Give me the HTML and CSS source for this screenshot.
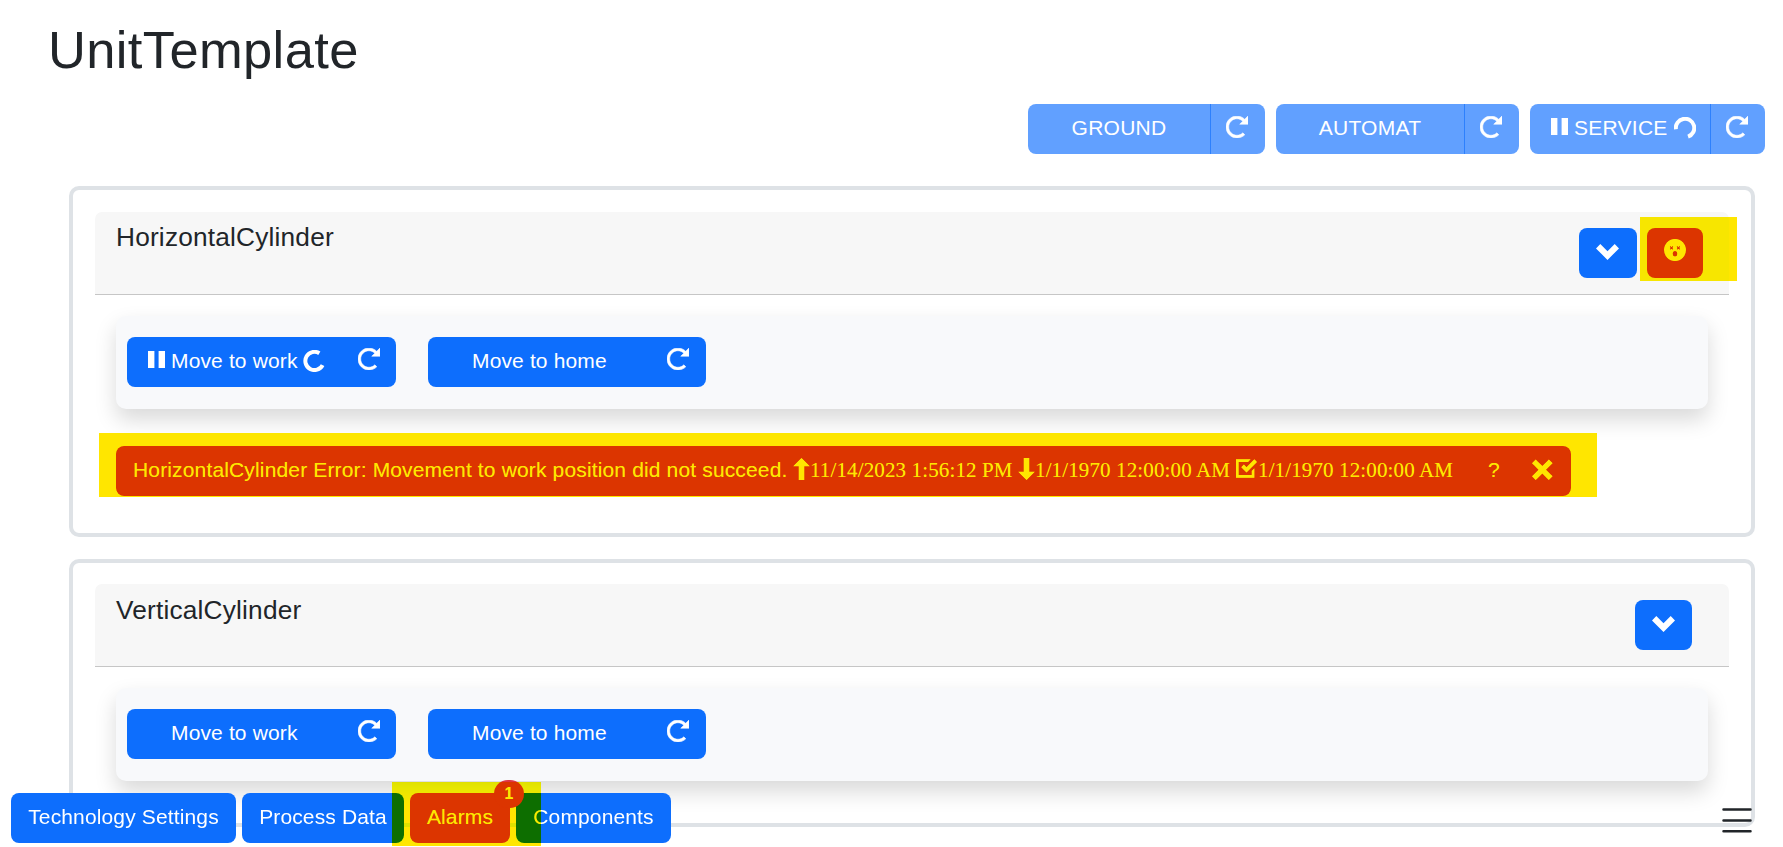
FILE: index.html
```html
<!DOCTYPE html>
<html lang="en">
<head>
<meta charset="utf-8">
<title>UnitTemplate</title>
<link rel="stylesheet" href="styles.css">
</head>
<body>
<svg class="defs" width="0" height="0">
  <symbol id="reload" viewBox="0 0 8 8"><path d="M4 0c-2.2 0-4 1.8-4 4s1.8 4 4 4c1.1 0 2.12-.43 2.84-1.16l-.72-.72c-.54.54-1.29.88-2.13.88-1.66 0-3-1.34-3-3s1.34-3 3-3c.83 0 1.55.36 2.09.91l-1.09 1.09h3v-3l-1.19 1.19c-.72-.72-1.71-1.19-2.81-1.19z"/></symbol>
  <symbol id="pause" viewBox="0 0 17 17"><path d="M0 0h6.4v17H0zM10.6 0H17v17h-6.4z"/></symbol>
  <symbol id="chevron" viewBox="0 0 8 5.5"><path d="M1.5 0l-1.5 1.5 4 4 4-4-1.5-1.5-2.5 2.5-2.5-2.5z"/></symbol>
  <symbol id="up" viewBox="0 0 6 8"><path d="M3 0l-3 3h2v5h2v-5h2l-3-3z"/></symbol>
  <symbol id="down" viewBox="0 0 6 8"><path d="M2 0v5h-2l3.03 3 2.97-3h-2v-5h-2z"/></symbol>
  <symbol id="task" viewBox="0 0 8 7"><path d="M0 0v7h7v-3.59l-1 1v1.59h-5v-5h3.59l1-1h-5.59zm7 0l-3 3-1-1-1 1 2 2 4-4-1-1z"/></symbol>
  <symbol id="cross" viewBox="0 0 8 8"><path d="M1.41 0l-1.41 1.41.72.72 1.78 1.81-1.78 1.78-.72.69 1.41 1.44.72-.72 1.81-1.81 1.78 1.81.69.72 1.44-1.44-.72-.69-1.81-1.78 1.81-1.81.72-.72-1.44-1.41-.69.72-1.78 1.78-1.81-1.78-.72-.72z"/></symbol>
</svg>

<h1 class="title">UnitTemplate</h1>

<div class="modes">
  <div class="group ground"><button class="main">GROUND</button><button class="side"><svg class="reload"><use href="#reload"/></svg></button></div>
  <div class="group automat"><button class="main">AUTOMAT</button><button class="side"><svg class="reload"><use href="#reload"/></svg></button></div>
  <div class="group service"><button class="main"><svg class="pause"><use href="#pause"/></svg><span>SERVICE</span><svg class="spinner" viewBox="0 0 21 21"><path d="M1.8 11.6A8.8 8.8 0 1 1 13.4 18.8"/></svg></button><button class="side"><svg class="reload"><use href="#reload"/></svg></button></div>
</div>

<main class="cards">
  <section class="card card-tall">
    <header class="head">
      <h5 class="name">HorizontalCylinder</h5>
      <div class="tools">
        <button class="btn toggle"><svg class="chevron"><use href="#chevron"/></svg></button>
        <button class="btn danger face-btn"><svg class="face" viewBox="0 0 22 22"><circle cx="11" cy="11" r="10.9" fill="#fff"/><g stroke="#dc3545" stroke-width="1.1"><path d="M6 7.3l3 3M9 7.3l-3 3M12.9 7.3l3 3M15.9 7.3l-3 3"/></g><ellipse cx="11" cy="14.8" rx="2.3" ry="2.7" fill="#dc3545"/></svg></button>
      </div>
    </header>
    <div class="panel">
      <button class="btn task-btn work"><svg class="pause"><use href="#pause"/></svg><span class="label">Move to work</span><svg class="spinner" viewBox="0 0 21 21"><path d="M15.6 3.1A8.7 8.7 0 1 0 18.7 14.4"/></svg><svg class="reload"><use href="#reload"/></svg></button>
      <button class="btn task-btn home"><span class="label">Move to home</span><svg class="reload"><use href="#reload"/></svg></button>
    </div>
    <div class="alarm">
      <span class="message">HorizontalCylinder Error: Movement to work position did not succeed.</span>
      <span class="stamp raised"><svg class="arrow"><use href="#up"/></svg><span class="time">11/14/2023 1:56:12 PM</span></span>
      <span class="stamp fallen"><svg class="arrow"><use href="#down"/></svg><span class="time">1/1/1970 12:00:00 AM</span></span>
      <span class="stamp acked"><svg class="check"><use href="#task"/></svg><span class="time">1/1/1970 12:00:00 AM</span></span>
      <span class="help">?</span>
      <svg class="cross"><use href="#cross"/></svg>
    </div>
  </section>

  <section class="card card-short">
    <header class="head">
      <h5 class="name">VerticalCylinder</h5>
      <div class="tools tools-single">
        <button class="btn toggle"><svg class="chevron"><use href="#chevron"/></svg></button>
      </div>
    </header>
    <div class="panel">
      <button class="btn task-btn work"><span class="label">Move to work</span><svg class="reload"><use href="#reload"/></svg></button>
      <button class="btn task-btn home"><span class="label">Move to home</span><svg class="reload"><use href="#reload"/></svg></button>
    </div>
  </section>
</main>

<footer class="bar">
  <button class="btn settings">Technology Settings</button>
  <button class="btn process">Process Data</button>
  <button class="btn danger alarms">Alarms<span class="badge">1</span></button>
  <button class="btn components">Components</button>
  <svg class="menu" viewBox="0 0 30 26"><path d="M1.5 2.6h27M1.5 13.4h27M1.5 24.2h27"/></svg>
</footer>

<div class="marker marker-face"></div>
<div class="marker marker-alarm"></div>
<div class="marker marker-tab"></div>
</body>
</html>
```
FILE: styles.css
```css
* { box-sizing: border-box; }

body {
  position: relative;
  margin: 0;
  width: 1783px;
  height: 847px;
  overflow: hidden;
  background: #fff;
  color: #212529;
  font: 21px/31.5px "Liberation Sans", Arial, sans-serif;
}

.defs { position: absolute; }

svg { display: block; flex: none; fill: currentColor; }

button {
  margin: 0;
  padding: 0;
  border: 0;
  color: #fff;
  background: none;
  font: inherit;
  letter-spacing: .14px;
  white-space: nowrap;
}

.title {
  margin: 0;
  padding: 18px 0 0 48px;
  height: 104px;
  font-size: 52.5px;
  line-height: 63px;
  font-weight: 400;
  letter-spacing: .36px;
}

.reload { width: 22px; height: 22px; stroke: currentColor; stroke-width: .2; }
.pause { width: 17px; height: 17px; }
.chevron { width: 23px; height: 16px; }
.spinner { width: 22px; height: 22px; fill: none; stroke: currentColor; stroke-width: 3.8; }

/* unit modes */
.modes {
  display: flex;
  justify-content: flex-end;
  gap: 11px;
  height: 82px;
  padding-right: 18px;
}
.group {
  display: flex;
  height: 50px;
  border-radius: 8px;
  overflow: hidden;
  background: #61a0ff;
}
.ground { width: 237px; }
.automat { width: 243px; }
.service { width: 235px; }
.main {
  display: flex;
  flex: 1;
  align-items: center;
  justify-content: center;
  padding-bottom: 3px;
  letter-spacing: .25px;
}
.side {
  width: 55px;
  padding: 12px 0 0 15px;
  border-left: 1px solid #2d80fd;
}
.side .reload { margin-top: -17px; }
.service .main { justify-content: flex-start; padding-left: 21px; }
.service .pause { margin: -2px 6px 0 0; }
.service .spinner { margin: 0 0 0 6px; }

/* cylinder cards */
.cards {
  display: flex;
  flex-direction: column;
  gap: 22px;
  padding: 0 28px 0 69px;
}
.card {
  border: 4px solid #dee2e6;
  border-radius: 10px;
}
.card-tall { height: 351px; padding: 22px 22px 0; }
.card-short { height: 268px; padding: 21px 22px 0; }
.head {
  display: flex;
  justify-content: space-between;
  height: 83px;
  padding: 10px 26px 0 21px;
  border-bottom: 1px solid #c6c6c6;
  border-radius: 7px 7px 0 0;
  background: #f7f7f7;
}
.name {
  margin: 0;
  font-size: 26.25px;
  line-height: 31.5px;
  font-weight: 400;
  letter-spacing: .19px;
}
.card-short .name { padding-top: 1px; }
.tools { display: flex; gap: 10px; padding-top: 6px; }
.tools-single { padding-right: 11px; }

.btn {
  height: 50px;
  border-radius: 8px;
  background: #0d6efd;
}
.danger { background: #dc3545; }
.toggle { width: 58px; padding: 0 0 3px 17px; }
.tools-single .toggle { width: 57px; }
.face-btn { width: 56px; padding: 0 0 6px 17px; }
.face { width: 22px; height: 22px; }

.panel {
  display: flex;
  gap: 32px;
  height: 93px;
  margin: 21px 21px 0;
  padding: 21px 11px;
  border-radius: 10px;
  background: #f8f9fb;
  box-shadow: 0 10.5px 21px rgba(0, 0, 0, .15);
}
.task-btn {
  display: flex;
  align-items: center;
  padding: 0 17px 3px 44px;
}
.task-btn .reload { margin: -3px 0 0 auto; }
.work { width: 269px; padding-right: 16px; }
.work .pause { margin: -2px 6px 0 -23px; }
.work .spinner { margin-left: 5px; }
.home { width: 278px; }

.alarm {
  display: flex;
  align-items: center;
  width: 1455px;
  height: 50px;
  margin: 37px 0 0 21px;
  padding: 0 0 3px 17px;
  border-radius: 8px;
  background: #dc3545;
  color: #fff;
  white-space: nowrap;
}
.message { width: 660px; letter-spacing: .15px; }
.stamp {
  display: flex;
  align-items: center;
  font-family: "Liberation Serif", "Times New Roman", serif;
  letter-spacing: .13px;
}
.time { padding-top: 3px; }
.arrow { width: 17px; height: 22px; margin-top: -2px; }
.raised { width: 225px; }
.fallen { width: 218px; }
.acked { width: 252px; }
.check { width: 21px; height: 19px; margin: -3px 1px 0 0; }
.help { width: 44px; }
.cross { width: 21px; height: 22px; margin-top: 1px; }

/* bottom bar */
.bar {
  position: fixed;
  left: 0;
  bottom: 4px;
  display: flex;
  gap: 6px;
  width: 1783px;
  padding-left: 11px;
}
.bar .btn { padding-bottom: 3px; }
.settings { width: 225px; }
.process { width: 162px; }
.alarms { position: relative; width: 100px; }
.components { width: 155px; }
.badge {
  position: absolute;
  top: -13px;
  left: 84px;
  z-index: 1;
  width: 30px;
  height: 28px;
  border-radius: 14px;
  background: #dc3545;
  font-size: 15.75px;
  line-height: 27px;
  font-weight: 700;
}
.menu {
  width: 30px;
  height: 26px;
  margin: 14px 31px 0 auto;
  fill: none;
  stroke: #212529;
  stroke-width: 2.5;
  stroke-linecap: round;
}

/* highlighter strokes laid over the page */
.marker {
  position: absolute;
  z-index: 5;
  background: #ffe600;
  mix-blend-mode: darken;
}
.marker-face { left: 1640px; top: 217px; width: 97px; height: 64px; }
.marker-alarm { left: 99px; top: 433px; width: 1498px; height: 64px; }
.marker-tab { left: 392px; top: 782px; width: 149px; height: 64px; }
```
